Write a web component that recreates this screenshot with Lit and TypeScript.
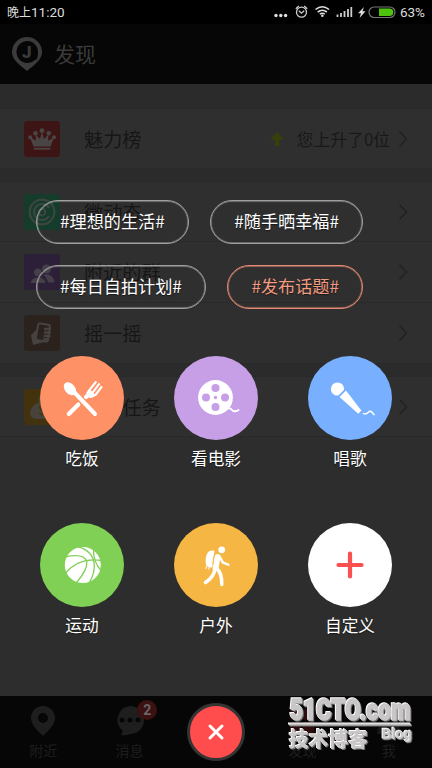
import { LitElement, html, css, svg } from "lit";
import { customElement } from "lit/decorators.js";
import { classMap } from "lit/directives/class-map.js";

const rowIcons: Record<string, unknown> = {
  crown: svg`<g fill="#4b4444"><path d="M9.5 25.5 6 16.5 12 19.5 11.5 13.5 16 18 18 11 20 18 24.5 13.5 24 19.5 30 16.5 26.5 25.5Z"/><rect x="10" y="26.8" width="16.5" height="1.8"/><circle cx="18" cy="9.7" r="2.4"/><circle cx="11.5" cy="12.3" r="2.3"/><circle cx="24.8" cy="12.3" r="2.3"/><circle cx="6.2" cy="16.3" r="2"/><circle cx="30" cy="16.3" r="2"/></g>`,
  moments: svg`<g fill="none" stroke="#3c4641" stroke-width="2.2"><circle cx="18" cy="18" r="12.3"/><path d="M25 14a8 8 0 1 0 0 8"/><circle cx="18" cy="18" r="3.3"/></g>`,
  group: svg`<g fill="#443f48"><circle cx="22.500" cy="15" r="4.600"/><path d="M19 20.500q10-2 11.500 8H24q-1-5-5-8Z"/></g><g fill="#443f48" stroke="#2c1f38" stroke-width="1"><circle cx="14" cy="18.500" r="4.500"/><path d="M6.500 29.500q0-6.500 7.500-6.500t8 6.500Z"/></g>`,
  shake: svg`<g fill="none" stroke="#464240" stroke-width="2"><rect x="13" y="9" width="12" height="17" rx="2" transform="rotate(9 19 17)"/><path d="M20 14h7M20 17.500h7M19.500 21h7M19 24.500h6" stroke-width="2.600"/><path d="m7 20 5-5 1 9 7 3-11 3Z" fill="#464240" stroke="none"/></g>`,
  bag: svg`<path fill="#47433a" d="m14 7 3 2 2-2 3 2 3-2-2 6q8 5 8 11 0 6-8 6H14q-8 0-8-6 0-6 9-11Z"/><path d="M21 17q-4-2-5 .5t2.500 3 2 3.500-5 .5M18.500 15v11" stroke="#42320e" stroke-width="1.500" fill="none"/>`,
};

const actionIcons: Record<string, unknown> = {
  eat: svg`<g stroke="#fff" stroke-linecap="round" fill="none"><path d="m28.800 58 9.500-9.500" stroke-width="4.200"/><path d="m34 36 21 22" stroke-width="4"/><path d="m46 41 3-3" stroke-width="4"/><path d="m49.500 34 6.300-8M53 36.200l6-8M55.500 39l6-8" stroke-width="2.100"/></g><path fill="#fff" d="M46.500 39.500q-1-4 3-6.500l6.500 6.500q-4 3.500-7.500 2Z"/><ellipse cx="30" cy="32.800" rx="5" ry="7.500" transform="rotate(-42 30 32.800)" fill="#fff"/>`,
  film: svg`<circle cx="41.500" cy="41.500" r="17.400" fill="#fff"/><g fill="#c79fe6"><circle cx="41.500" cy="32" r="4"/><circle cx="41.500" cy="51" r="4"/><circle cx="32" cy="41.500" r="4"/><circle cx="51" cy="41.500" r="4"/><circle cx="41.500" cy="41.500" r="1.700"/></g><path d="M51 54q3-3 6-1 3 4 7.500 1" stroke="#fff" stroke-width="2" fill="none" stroke-linecap="round"/>`,
  mic: svg`<circle cx="29.500" cy="33" r="6.600" fill="#fff"/><path d="m30 41.500 8-8" stroke="#78b0ff" stroke-width="2.400"/><path d="M31.500 41 38 34.600 53.300 54.600 50.300 57.700Z" fill="#fff"/><path d="M55.500 57.600q3 1 5-1.500t5.500 2.500" stroke="#fff" stroke-width="1.500" fill="none" stroke-linecap="round"/>`,
  ball: svg`<circle cx="42.800" cy="42" r="18" fill="#fff"/><g fill="none" stroke="#81d056" stroke-width="1.300"><path d="M25 34q19-4 21.800 4.500 1 8-10.300 21"/><path d="M37 23.500q16 4 17.300 18 .3 10-5.300 18.500"/><path d="M25.500 50q14-16 36-12.500"/><path d="M53.500 26q-.5 13 8 22"/></g>`,
  hike: svg`<g fill="#fff"><circle cx="47.700" cy="26.800" r="3.400"/><path d="M34 29q3-2 6.500-1.200L38 44.500q-3 0-5.500-1.500-2.500-7 1.500-14Z"/></g><path d="m32.500 43-.5 3M35.200 43.500l-.5 3" stroke="#fff"/><g stroke="#fff" fill="none" stroke-linecap="round" stroke-linejoin="round"><path d="m43.500 34-2 11" stroke-width="6"/><path d="M41 46q-1 8-9.500 13.500" stroke-width="3.500"/><path d="M42.500 45.500q5.500 4 5.300 16" stroke-width="3.500"/><path d="m45 33 4 6.700 5.300 2" stroke-width="2.500"/></g><path d="M41.500 30q-3 5-2.500 11.500" stroke="#f6b644" stroke-width="1" fill="none"/>`,
  plus: svg`<path d="M42 30.500v23M30.500 42h23" stroke="#fb5050" stroke-width="4.200" stroke-linecap="round"/>`,
};

@customElement("app-root")
export class AppRoot extends LitElement {
  static styles = css`
    :host { display: block; position: relative; width: 432px; height: 768px; overflow: hidden; background: #2d2d2d;
      font-family: "Noto Sans CJK SC", sans-serif; }
    * { box-sizing: border-box; }
    svg { display: block; flex: none; }
    .page { height: 768px; display: flex; flex-direction: column; }
    .status { height: 24px; flex: none; background: #000; color: #dcdcdc; display: flex; align-items: center; padding: 0 7px; font: 13.5px/24px Roboto, "Noto Sans CJK SC", sans-serif; }
    .status .am { font-size: 12px; padding-top: 1px; }
    .status .icons { margin-left: auto; margin-right: 4px; }
    .header { height: 60px; flex: none; background: #060606; display: flex; align-items: center; padding-left: 12px; padding-bottom: 1px; gap: 12px; color: #3a3a3a; font-size: 21px; line-height: 30px; }
    .logo { font: 900 17px Roboto, sans-serif; fill: #3b3b3b; }
    .title { padding-bottom: 2px; }
    .list { padding-top: 24px; background: #2b2b2b; }
    .row { height: 61px; background: #2f2f2f; border-bottom: 1px solid #292929; display: flex; align-items: center; padding: 0 24px; color: #161616; font-size: 19.2px; }
    .row.first { border-top: 1px solid #292929; }
    .row.gap { margin-bottom: 12px; }
    .tile { border-radius: 3px; margin-right: 24px; }
    .crown { background: #3d1515; } .moments { background: #153c2a; } .group { background: #2c1f38; }
    .shake { background: #2b221e; } .bag { background: #42320e; }
    .hint { margin-left: auto; display: flex; align-items: center; gap: 13px; color: #191919; font-size: 16.8px; }
    .chev { margin-left: auto; }
    .hint + .chev { margin-left: 8px; }
    .nav { margin-top: auto; height: 72px; flex: none; background: #060606; display: grid; grid-template-columns: repeat(5, 1fr); color: #1e1e1e; font-size: 14px; }
    .tab { display: flex; flex-direction: column; align-items: center; padding-top: 8px; line-height: 20px; position: relative; }
    .tab svg { margin-bottom: 2px; }
    .badge { position: absolute; left: 51px; top: 4px; width: 20px; height: 20px; border-radius: 50%; background: #3b1111; color: #666; font: bold 14px/21px Roboto, sans-serif; text-align: center; }
    .overlay { position: absolute; inset: 0; padding-top: 200px; display: flex; flex-direction: column; }
    .tags { padding-left: 36px; display: flex; flex-wrap: wrap; column-gap: 21.5px; row-gap: 21px; }
    .tag { height: 44px; border: 1px solid #a0a0a0; box-shadow: inset 0 0 1px 0.4px #a0a0a0; border-radius: 22px; padding: 0 23px; line-height: 40px; font-size: 17.15px; color: #fff; text-shadow: 0 1px 1px #0008; white-space: nowrap; }
    .tag.hot { color: #f49a80; border-color: #e58b73; box-shadow: inset 0 0 1px 0.4px #e58b73; }
    .actions { margin-top: 47px; padding: 0 15px; display: grid; grid-template-columns: repeat(3, 134px); row-gap: 47px; }
    .action { display: flex; flex-direction: column; align-items: center; color: #fff; font-size: 16.7px; line-height: 36px; text-shadow: 0 1px 1px #0008; }
    .disc { width: 84px; height: 84px; border-radius: 50%; }
    .eat { background: #ff9166; } .film { background: #c79fe6; } .mic { background: #78b0ff; }
    .ball { background: #81d056; } .hike { background: #f6b644; } .plus { background: #fff; }
    .close { margin: auto auto 7px; width: 58px; height: 58px; border-radius: 50%; background: #ff4c4c; border: 3px solid #343434; display: grid; place-items: center; }
    .mark { position: absolute; left: 284px; top: 690px; filter: drop-shadow(-0.5px -0.5px 0 #fff) drop-shadow(1px 1px 0 #707070); }
    .mark text { fill: #c8c6c6; stroke: #c8c6c6; }
    .big { font: 900 29px Roboto, sans-serif; stroke-width: 1.4px; }
    .cn { font: 900 20px "Noto Sans CJK SC", sans-serif; stroke-width: 0; }
    .blog { font: bold 14px "Liberation Sans", sans-serif; stroke-width: 0.4px; }
  `;

  private row(icon: string, label: string, cls: Record<string, boolean> = {}, hint = false) {
    return html`<div class=${classMap({ row: true, ...cls })}>
      <svg class="tile ${icon}" width="36" height="36">${rowIcons[icon]}</svg>${label}
      ${hint ? html`<div class="hint"><svg width="14" height="14"><path d="M7 0 14 7.500H9.300V14H4.700V7.500H0Z" fill="#374009"/></svg>您上升了0位</div>` : ""}
      <svg class="chev" width="10" height="18"><path d="m1.500 1.500 7 7.500-7 7.500" fill="none" stroke="#222" stroke-width="1.600"/></svg>
    </div>`;
  }

  private action(icon: string, label: string) {
    return html`<div class="action"><svg class="disc ${icon}" viewBox="0 0 84 84">${actionIcons[icon]}</svg><span>${label}</span></div>`;
  }

  render() {
    return html`
      <div class="page">
        <div class="status"><span class="am">晚上</span><span>11:20</span>
          <svg class="icons" width="122" height="24">
            <g fill="#ddd"><circle cx="2" cy="15.500" r="1.700"/><circle cx="6.800" cy="15.500" r="1.700"/><circle cx="11.600" cy="15.500" r="1.700"/></g>
            <g fill="none" stroke="#ccc" stroke-width="1.300"><circle cx="27.500" cy="12.200" r="5"/><path d="m24.800 10.800 2.700 2.400 2.700-2.400M21.800 8.800l3-2.700M33.200 8.800l-3-2.700"/></g>
            <g fill="none" stroke="#ddd" stroke-width="1.600"><path d="M41.500 9.500q6.800-5.500 13.600 0M43.700 12q4.600-3.600 9.200 0M45.800 14.200q2.500-1.800 5 0"/></g><circle cx="48.300" cy="15.700" r="1.300" fill="#ddd"/>
            <path d="M63.500 17v-2.500M67 17v-4M70.500 17V11M74 17V9M77.300 17V7" stroke="#ccc" stroke-width="1.800"/>
            <path d="m90 7-6 6.200h3L85.500 18l6-6.800h-3Z" fill="#ddd"/>
            <rect x="95" y="7" width="26" height="10.500" rx="5.200" fill="none" stroke="#777" stroke-width="1.200"/><path d="M105 8.500h10.500a3.700 3.700 0 0 1 0 7.500H105Z" fill="#4fc40e"/>
          </svg><span>63%</span></div>
        <div class="header"><svg width="30" height="36"><path fill-rule="evenodd" fill="#3b3b3b" d="M15 1a15 15 0 0 1 15 15c0 8-8 13-15 19C8 29 0 24 0 16A15 15 0 0 1 15 1Zm0 4a11 11 0 1 0 8 19l2-1q1-3 1-7A11 11 0 0 0 15 5Z"/><text class="logo" x="10" y="22">J</text></svg><span class="title">发现</span></div>
        <div class="list">
          ${this.row("crown", "魅力榜", { first: true, gap: true }, true)}
          ${this.row("moments", "微动态", { first: true })}
          ${this.row("group", "附近的群")}
          ${this.row("shake", "摇一摇", { gap: true })}
          ${this.row("bag", "每日任务", { first: true })}
        </div>
        <div class="nav">
          <div class="tab"><svg width="28" height="34"><path fill="#1e1e1e" fill-rule="evenodd" d="M14 2a12 12 0 0 1 12 12c0 7-8 14-12 18C10 28 2 21 2 14A12 12 0 0 1 14 2Zm0 7a5 5 0 1 0 0 10 5 5 0 0 0 0-10Z"/></svg>附近</div>
          <div class="tab"><svg width="28" height="34"><path fill="#1e1e1e" d="M14 2a14 14 0 0 1 0 28q-4 2-9 1l2-4A14 14 0 0 1 14 2Z"/><g fill="#060606"><circle cx="6" cy="16" r="2.500"/><circle cx="14" cy="16" r="2.500"/><circle cx="22" cy="16" r="2.500"/></g></svg>消息<span class="badge">2</span></div>
          <div class="tab"></div>
          <div class="tab"><svg width="28" height="34"><g fill="#2c0c0c"><rect x="2" y="5" width="11" height="11" rx="2"/><rect x="15" y="5" width="11" height="11" rx="2"/><rect x="2" y="18" width="11" height="11" rx="2"/><rect x="15" y="18" width="11" height="11" rx="2"/></g></svg>发现</div>
          <div class="tab"><svg width="28" height="34"><circle cx="14" cy="10" r="7" fill="#171717"/><path d="M2 30q0-11 12-11t12 11Z" fill="#171717"/></svg>我</div>
        </div>
      </div>
      <div class="overlay">
        <div class="tags"><span class="tag">#理想的生活#</span><span class="tag">#随手晒幸福#</span><span class="tag">#每日自拍计划#</span><span class="tag hot">#发布话题#</span></div>
        <div class="actions">${this.action("eat", "吃饭")}${this.action("film", "看电影")}${this.action("mic", "唱歌")}${this.action("ball", "运动")}${this.action("hike", "户外")}${this.action("plus", "自定义")}</div>
        <div class="close"><svg width="18" height="18"><path d="m3 3 12 12M15 3 3 15" stroke="#fff" stroke-width="3" stroke-linecap="round"/></svg></div>
      </div>
      <svg class="mark" width="140" height="70">
        <text class="big" x="6" y="29.5" textLength="121" lengthAdjust="spacingAndGlyphs">51CTO.com</text>
        <path d="M5 33.500h122v2H5Z" fill="#c2c0c0"/>
        <text class="cn" x="5" y="57" textLength="79" lengthAdjust="spacingAndGlyphs">技术博客</text>
        <text class="blog" x="98" y="49" textLength="30" lengthAdjust="spacingAndGlyphs">Blog</text>
      </svg>`;
  }
}
